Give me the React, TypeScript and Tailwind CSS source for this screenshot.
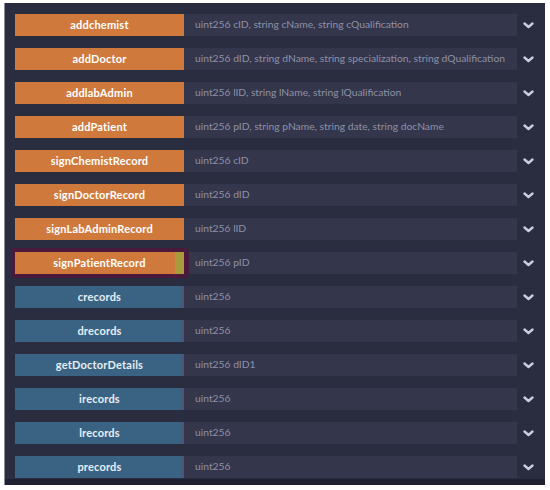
import React from 'react';

type Fn = { name: string; args: string; kind: 'tx' | 'call'; focused?: boolean };

const fns: Fn[] = [
  { name: 'addchemist', args: 'uint256 cID, string cName, string cQualification', kind: 'tx' },
  { name: 'addDoctor', args: 'uint256 dID, string dName, string specialization, string dQualification', kind: 'tx' },
  { name: 'addlabAdmin', args: 'uint256 lID, string lName, string lQualification', kind: 'tx' },
  { name: 'addPatient', args: 'uint256 pID, string pName, string date, string docName', kind: 'tx' },
  { name: 'signChemistRecord', args: 'uint256 cID', kind: 'tx' },
  { name: 'signDoctorRecord', args: 'uint256 dID', kind: 'tx' },
  { name: 'signLabAdminRecord', args: 'uint256 lID', kind: 'tx' },
  { name: 'signPatientRecord', args: 'uint256 pID', kind: 'tx', focused: true },
  { name: 'crecords', args: 'uint256', kind: 'call' },
  { name: 'drecords', args: 'uint256', kind: 'call' },
  { name: 'getDoctorDetails', args: 'uint256 dID1', kind: 'call' },
  { name: 'irecords', args: 'uint256', kind: 'call' },
  { name: 'lrecords', args: 'uint256', kind: 'call' },
  { name: 'precords', args: 'uint256', kind: 'call' },
];

const Chevron = () => (
  <svg width="11" height="7" viewBox="0 0 11 7" className="shrink-0">
    <path d="M1.5 1.5 L5.5 5 L9.5 1.5" fill="none" stroke="#c9cbe0" strokeWidth="2.4" strokeLinecap="round" strokeLinejoin="round" />
  </svg>
);

const Row = ({ fn }: { fn: Fn }) => {
  const btn =
    fn.kind === 'tx'
      ? 'bg-[#cf7a3c] text-white'
      : 'bg-[#3a6383] text-[#e6eef5]';
  return (
    <div className="flex items-center h-[22px]">
      <div
        className={`relative flex items-center justify-center w-[169px] h-full shrink-0 text-[11px] font-bold tracking-[0.2px] ${btn} ${
          fn.focused ? 'outline-[4px] outline outline-[#4a1a3c]' : ''
        }`}
      >
        {fn.name}
        {fn.focused && <span className="absolute right-0 top-0 h-full w-[9px] bg-[#a99a3c]" />}
        {fn.kind === 'call' && <span className="absolute right-0 top-0 h-full w-[3px] bg-[#4c5677]" />}
      </div>
      <div
        className={`flex items-center h-full w-[333px] bg-[#34364b] text-[10.3px] text-[#8e91a8] whitespace-nowrap overflow-hidden ${
          fn.focused ? 'border-l-[5px] border-[#4a1a3c] pl-[6px]' : 'pl-[11px]'
        }`}
      >
        {fn.args}
      </div>
      <div className="flex items-center justify-center w-[20px] ml-[1px]">
        <Chevron />
      </div>
    </div>
  );
};

export default function App() {
  return (
    <div className="w-[550px] h-[490px] bg-white pt-[3px] pl-[4px] pr-[5px] pb-[5px]" style={{ fontFamily: 'Lato, "Open Sans", sans-serif' }}>
      <div className="flex flex-col h-full bg-[#2a2c3f] border-l border-[#8a8c9c]">
        <div className="flex flex-col gap-[12px] pt-[11px] pl-[10px] flex-1">
          {fns.map((f) => (
            <Row key={f.name} fn={f} />
          ))}
        </div>
        <div className="h-[6px] bg-[#1f2130]" />
      </div>
    </div>
  );
}
